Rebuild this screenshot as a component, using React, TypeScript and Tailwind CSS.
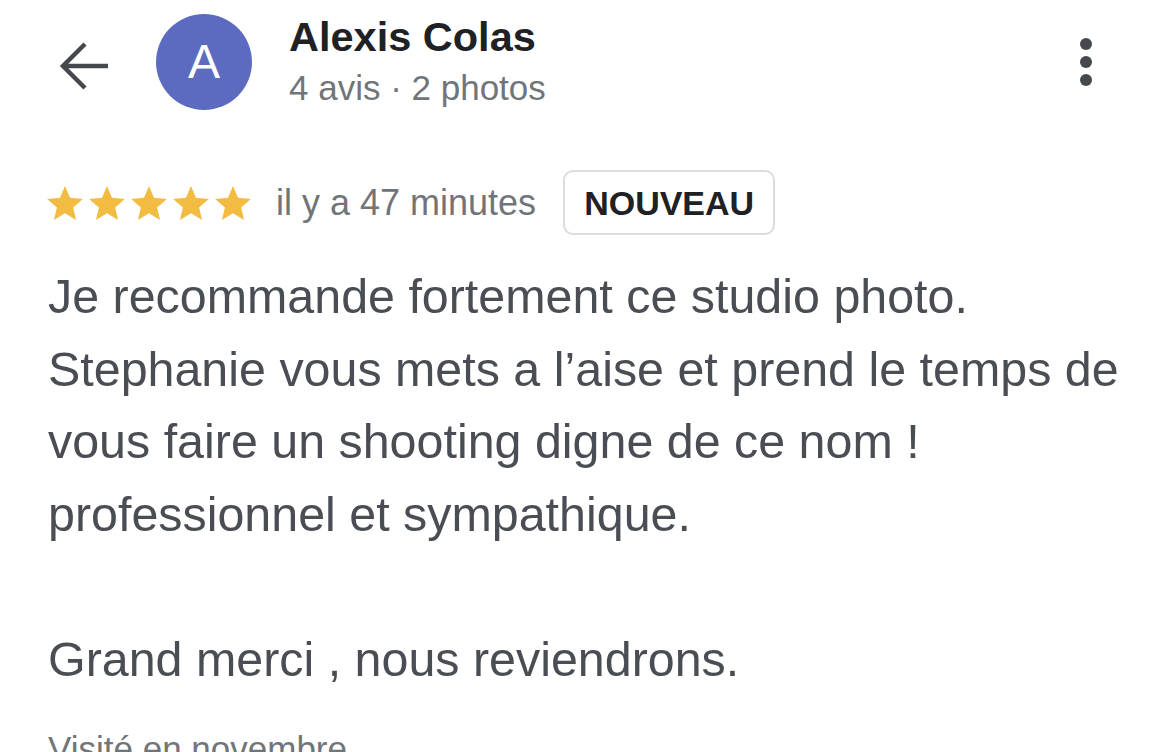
import React from "react";

const Star = () => (
  <svg width="36" height="34" viewBox="2 2 20 19" className="block">
    <path
      d="M12 17.27L18.18 21l-1.64-7.03L22 9.24l-7.19-.61L12 2 9.19 8.63 2 9.24l5.46 4.73L5.82 21z"
      fill="#f2bc42"
    />
  </svg>
);

export default function App() {
  const font = { fontFamily: '"Liberation Sans", Arial, sans-serif' };
  return (
    <div className="w-[1170px] h-[752px] bg-white overflow-hidden" style={font}>
      {/* Header */}
      <div className="flex items-start pt-[9px] pl-[58px] pr-[78px]">
        <div className="w-[52px] h-[96px] mt-[5px] flex items-center justify-center">
          <svg width="52" height="52" viewBox="0 0 52 52" className="mt-[8px]">
            <path
              d="M50 26H5M27 4L5 26l22 22"
              stroke="#45484d"
              strokeWidth="4.5"
              fill="none"
              strokeLinecap="butt"
              strokeLinejoin="miter"
            />
          </svg>
        </div>
        <div className="ml-[46px] mt-[5px] w-[96px] h-[96px] rounded-full bg-[#5c6bc0] flex items-center justify-center">
          <span className="text-white text-[48px] leading-none">A</span>
        </div>
        <div className="ml-[37px] flex flex-col pt-[4px]">
          <div className="text-[41.5px] leading-[48px] font-bold text-[#202124]">Alexis Colas</div>
          <div className="text-[35px] leading-[54px] text-[#70757a]">4 avis · 2 photos</div>
        </div>
        <div className="ml-auto mt-[29px] flex flex-col items-center gap-[6px]">
          <div className="w-[12px] h-[12px] rounded-full bg-[#45484d]" />
          <div className="w-[12px] h-[12px] rounded-full bg-[#45484d]" />
          <div className="w-[12px] h-[12px] rounded-full bg-[#45484d]" />
        </div>
      </div>

      {/* Rating row */}
      <div className="flex items-center pl-[47px] mt-[55px]">
        <div className="flex gap-[6px]">
          <Star />
          <Star />
          <Star />
          <Star />
          <Star />
        </div>
        <div className="ml-[25px] text-[36px] text-[#70757a] leading-none">il y a 47 minutes</div>
        <div className="ml-[27px] h-[65px] px-[19px] border-2 border-[#dadce0] rounded-[10px] flex items-center">
          <span className="text-[34px] font-bold text-[#202124] leading-none">NOUVEAU</span>
        </div>
      </div>

      {/* Body */}
      <div className="pl-[48px] mt-[25px] text-[48.4px] leading-[72.5px] text-[#4a4e54] whitespace-nowrap">
        <div>Je recommande fortement ce studio photo.</div>
        <div>Stephanie vous mets a l’aise et prend le temps de</div>
        <div>vous faire un shooting digne de ce nom !</div>
        <div>professionnel et sympathique.</div>
        <div>&nbsp;</div>
        <div>Grand merci , nous reviendrons.</div>
      </div>

      <div className="pl-[48px] mt-[30px] text-[35px] leading-[48px] text-[#70757a]">Visité en novembre</div>
    </div>
  );
}
